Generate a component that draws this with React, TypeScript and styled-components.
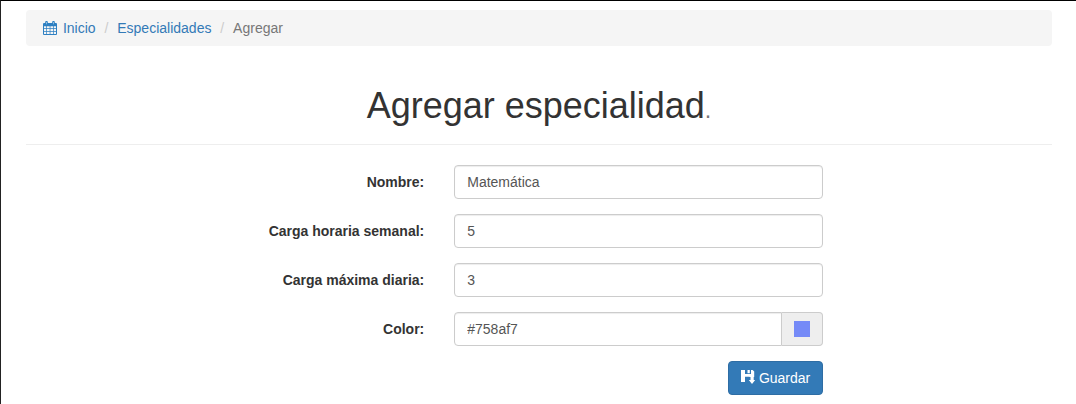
import React, { useState } from 'react';
import styled, { createGlobalStyle } from 'styled-components';

const GlobalStyle = createGlobalStyle`
  *, *::before, *::after { box-sizing: border-box; }
  body {
    margin: 0;
    background: #fff;
    color: #333;
    font: 14px/20px "Liberation Sans", Arial, sans-serif;
  }
`;

const Page = styled.div`
  height: 404px;
  overflow: hidden;
  border-top: 1px solid #000;
  border-left: 1px solid #222;
  padding: 9px 24px 0 25px;
`;

const Breadcrumb = styled.ol`
  display: flex;
  list-style: none;
  margin: 0;
  height: 36px;
  padding: 8px 15px;
  background: #f5f5f5;
  border-radius: 4px;
`;

const Crumb = styled.li<{ $active?: boolean }>`
  color: ${(p) => (p.$active ? '#777' : '#337ab7')};
  white-space: pre;

  &:not(:first-child)::before {
    content: '/\\00a0';
    padding: 0 5px;
    margin-left: 3.9px;
    color: #ccc;
  }
`;

const CrumbLink = styled.a`
  color: #337ab7;
  text-decoration: none;
`;

const CalendarGlyph = styled.svg`
  width: 14px;
  height: 14px;
  margin: 0 5.9px 0 2px;
  vertical-align: -2px;
  fill: #2e80c2;
`;

const PageHeader = styled.header`
  margin: 40px 0 20px;
  height: 59px;
  border-bottom: 1px solid #eee;
  text-align: center;
`;

const Title = styled.h1`
  margin: 0;
  font-size: 36px;
  line-height: 39.6px;
  font-weight: 400;
`;

const Dot = styled.small`
  font-size: 23.4px;
  line-height: 1;
  color: #777;
`;

const Form = styled.form`
  display: grid;
  gap: 15px;
  width: 797.25px;
`;

const Field = styled.div`
  display: grid;
  grid-template-columns: 398.25px 369px;
  column-gap: 30px;
`;

const Label = styled.label`
  padding-top: 7px;
  font-weight: 700;
  text-align: right;
`;

const Input = styled.input<{ $grouped?: boolean }>`
  width: 100%;
  min-width: 0;
  height: 34px;
  padding: 6px 12px;
  border: 1px solid #ccc;
  border-radius: ${(p) => (p.$grouped ? '4px 0 0 4px' : '4px')};
  background: #fff;
  color: #555;
  font: inherit;
  box-shadow: inset 0 1px 1px rgba(0, 0, 0, 0.075);
  outline: none;
`;

const InputGroup = styled.div`
  display: flex;
`;

const Addon = styled.span`
  flex: none;
  display: flex;
  align-items: center;
  padding: 0 12px;
  height: 34px;
  border: 1px solid #ccc;
  border-left: 0;
  border-radius: 0 4px 4px 0;
  background: #eee;
`;

const Swatch = styled.i`
  width: 16px;
  height: 16px;
`;

const Actions = styled.div`
  display: flex;
  justify-content: flex-end;
`;

const SaveButton = styled.button`
  height: 34px;
  padding: 6px 12px;
  border: 1px solid #2e6da4;
  border-radius: 4px;
  background: #337ab7;
  color: #fff;
  font: inherit;
  white-space: nowrap;
`;

const SaveGlyph = styled.svg`
  width: 14px;
  height: 14px;
  margin-right: 4px;
  vertical-align: -1px;
  fill: currentColor;
`;

const CalendarIcon = () => (
  <CalendarGlyph viewBox="0 0 14 14" aria-hidden="true">
    <path
      fillRule="evenodd"
      d="M1 2h12q1 0 1 1v10q0 1-1 1H1q-1 0-1-1V3q0-1 1-1z
         M1 5.200v2h2.300v-2z M4 5.200v2h2.700v-2z M7.400 5.200v2h2.600v-2z M10.700 5.200v2H13v-2z
         M1 8v2.300h2.300V8z M4 8v2.300h2.700V8z M7.400 8v2.300h2.600V8z M10.700 8v2.300H13V8z
         M1 11v2h2.300v-2z M4 11v2h2.700v-2z M7.400 11v2h2.600v-2z M10.700 11v2H13v-2z"
    />
    <rect x="2.200" y="0" width="2.600" height="4.200" rx="1" />
    <rect x="9.200" y="0" width="2.600" height="4.200" rx="1" />
    <path d="M3.200 1h.6v2.300h-.6zM10.200 1h.6v2.300h-.6z" fill="#c3dcef" />
  </CalendarGlyph>
);

const SaveIcon = () => (
  <SaveGlyph viewBox="0 0 14 14" aria-hidden="true">
    <path d="M0 0h4v4h6V0h1.600L13.200 1.600V7H8.500V6.800H4V12H0z" />
    <path d="M6.500 0h2.300v3.200H6.500z" />
    <path d="M9.500 6.500h3.200v3.500H14.200L11 14l-3.200-4h1.700z" />
  </SaveGlyph>
);

export default function App() {
  const [name, setName] = useState('Matemática');
  const [weekly, setWeekly] = useState('5');
  const [daily, setDaily] = useState('3');
  const [color, setColor] = useState('#758af7');

  return (
    <>
      <GlobalStyle />
      <Page>
        <Breadcrumb>
          <Crumb>
            <CrumbLink href="#"><CalendarIcon />Inicio</CrumbLink>
          </Crumb>
          <Crumb><CrumbLink href="#">Especialidades</CrumbLink></Crumb>
          <Crumb $active>Agregar</Crumb>
        </Breadcrumb>
        <PageHeader>
          <Title>Agregar especialidad<Dot>.</Dot></Title>
        </PageHeader>
        <Form onSubmit={(e) => e.preventDefault()}>
          <Field>
            <Label htmlFor="name">Nombre:</Label>
            <Input id="name" value={name} onChange={(e) => setName(e.target.value)} />
          </Field>
          <Field>
            <Label htmlFor="weekly">Carga horaria semanal:</Label>
            <Input id="weekly" value={weekly} onChange={(e) => setWeekly(e.target.value)} />
          </Field>
          <Field>
            <Label htmlFor="daily">Carga máxima diaria:</Label>
            <Input id="daily" value={daily} onChange={(e) => setDaily(e.target.value)} />
          </Field>
          <Field>
            <Label htmlFor="color">Color:</Label>
            <InputGroup>
              <Input id="color" $grouped value={color} onChange={(e) => setColor(e.target.value)} />
              <Addon><Swatch style={{ backgroundColor: color }} /></Addon>
            </InputGroup>
          </Field>
          <Actions>
            <SaveButton type="submit"><SaveIcon />Guardar</SaveButton>
          </Actions>
        </Form>
      </Page>
    </>
  );
}
